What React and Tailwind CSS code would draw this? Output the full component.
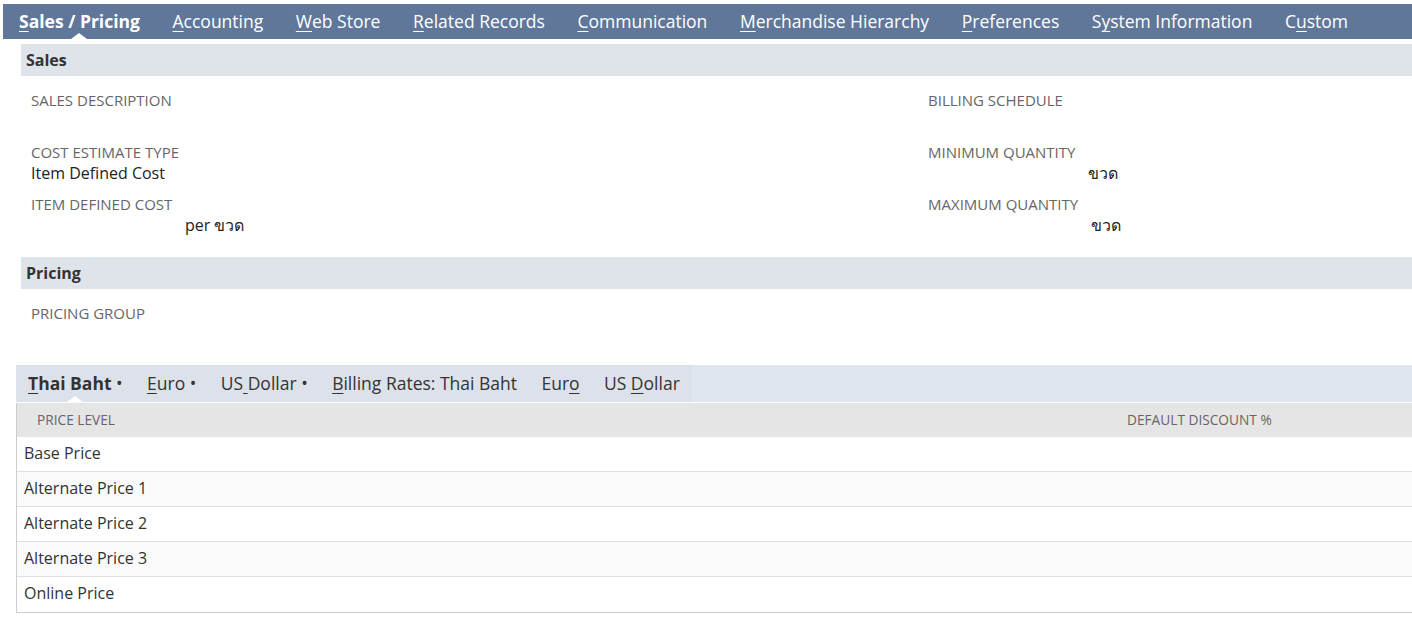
import React from "react";

const topTabs = [
  { pre: "", u: "S", post: "ales / Pricing", active: true },
  { pre: "", u: "A", post: "ccounting" },
  { pre: "", u: "W", post: "eb Store" },
  { pre: "", u: "R", post: "elated Records" },
  { pre: "", u: "C", post: "ommunication" },
  { pre: "", u: "M", post: "erchandise Hierarchy" },
  { pre: "", u: "P", post: "references" },
  { pre: "S", u: "y", post: "stem Information" },
  { pre: "C", u: "u", post: "stom" },
];

const subTabs = [
  { pre: "", u: "T", post: "hai Baht", dot: true, active: true },
  { pre: "", u: "E", post: "uro", dot: true },
  { pre: "US", u: " ", post: "Dollar", dot: true },
  { pre: "", u: "B", post: "illing Rates: Thai Baht" },
  { pre: "Eur", u: "o", post: "" },
  { pre: "US ", u: "D", post: "ollar" },
];

const rows = ["Base Price", "Alternate Price 1", "Alternate Price 2", "Alternate Price 3", "Online Price"];

const Label = ({ children, className = "" }) => (
  <div className={`h-[20px] text-[15px] leading-[20px] uppercase text-[#666] ${className}`}>{children}</div>
);

const Value = ({ children, className = "" }) => (
  <div className={`h-[22px] text-[16px] leading-[22px] text-[#222] ${className}`}>{children}</div>
);

const App = () => {
  return (
    <div
      className="w-[1412px] h-[623px] bg-white overflow-hidden pt-[4px]"
      style={{ fontFamily: '"Open Sans", "Noto Sans", sans-serif' }}
    >
      {/* main tabs */}
      <div className="ml-[3px] h-[35px] bg-[#607799] flex items-center pl-[16px] gap-[32.6px] text-[17.5px] text-white">
        {topTabs.map((t, i) => (
          <div key={i} className={`relative h-full flex items-center ${t.active ? "font-bold" : ""}`}>
            <span>
              {t.pre}
              <span className="underline underline-offset-[3px] decoration-1">{t.u}</span>
              {t.post}
            </span>
            {t.active && (
              <div className="absolute bottom-0 left-1/2 -translate-x-1/2 w-0 h-0 border-l-[8px] border-r-[8px] border-b-[6px] border-l-transparent border-r-transparent border-b-white" />
            )}
          </div>
        ))}
      </div>

      <div className="ml-[21px] mt-[5px]">
        <div className="h-[32px] bg-[#dfe4eb] flex items-center pl-[5px] text-[16px] font-bold text-[#333]">
          Sales
        </div>
        <div className="grid grid-cols-[897px_1fr] pl-[10px] pt-[14px]">
          <div>
            <Label>Sales Description</Label>
            <div className="h-[32px]" />
            <Label>Cost Estimate Type</Label>
            <Value>Item Defined Cost</Value>
            <Label className="mt-[10px]">Item Defined Cost</Label>
            <Value className="pl-[154px]">per ขวด</Value>
          </div>
          <div>
            <Label>Billing Schedule</Label>
            <div className="h-[32px]" />
            <Label>Minimum Quantity</Label>
            <Value className="pl-[160px]">ขวด</Value>
            <Label className="mt-[10px]">Maximum Quantity</Label>
            <Value className="pl-[163px]">ขวด</Value>
          </div>
        </div>

        <div className="mt-[21px] h-[32px] bg-[#dfe4eb] flex items-center pl-[5px] text-[16px] font-bold text-[#333]">
          Pricing
        </div>
        <div className="pl-[10px] pt-[14px] h-[76px]">
          <Label>Pricing Group</Label>
        </div>
      </div>

      {/* sub tabs */}
      <div className="ml-[16px] h-[37px] bg-[#e0e6ef] flex">
        <div className="h-full bg-[#dde2ea] flex items-center pl-[12px] pr-[12px] gap-[24.4px] text-[17.5px] text-[#333]">
          {subTabs.map((t, i) => (
            <div key={i} className={`relative h-full flex items-center ${t.active ? "font-bold" : ""}`}>
              <span>
                {t.pre}
                <span className="underline underline-offset-[3px] decoration-1 whitespace-pre">{t.u}</span>
                {t.post}
                {t.dot && <span className="font-normal"> •</span>}
              </span>
              {t.active && (
                <div className="absolute bottom-0 left-[39px] w-0 h-0 border-l-[8px] border-r-[8px] border-b-[6px] border-l-transparent border-r-transparent border-b-white" />
              )}
            </div>
          ))}
        </div>
      </div>

      {/* table */}
      <div className="ml-[16px] mt-[1px] border-l border-[#ccc] border-b">
        <div className="h-[34px] bg-[#e5e5e5] grid grid-cols-[1090px_1fr] items-center text-[13.7px] uppercase text-[#666]">
          <div className="pl-[20px]">Price Level</div>
          <div className="pl-[20px]">Default Discount %</div>
        </div>
        {rows.map((r, i) => (
          <div
            key={r}
            className={`h-[35px] flex items-center pl-[7px] pb-[3px] text-[16px] text-[#333] border-b border-[#e0e0e0] last:border-b-0 ${i % 2 ? "bg-[#fafafa]" : "bg-white"}`}
          >
            {r}
          </div>
        ))}
      </div>
    </div>
  );
};

export default App;
